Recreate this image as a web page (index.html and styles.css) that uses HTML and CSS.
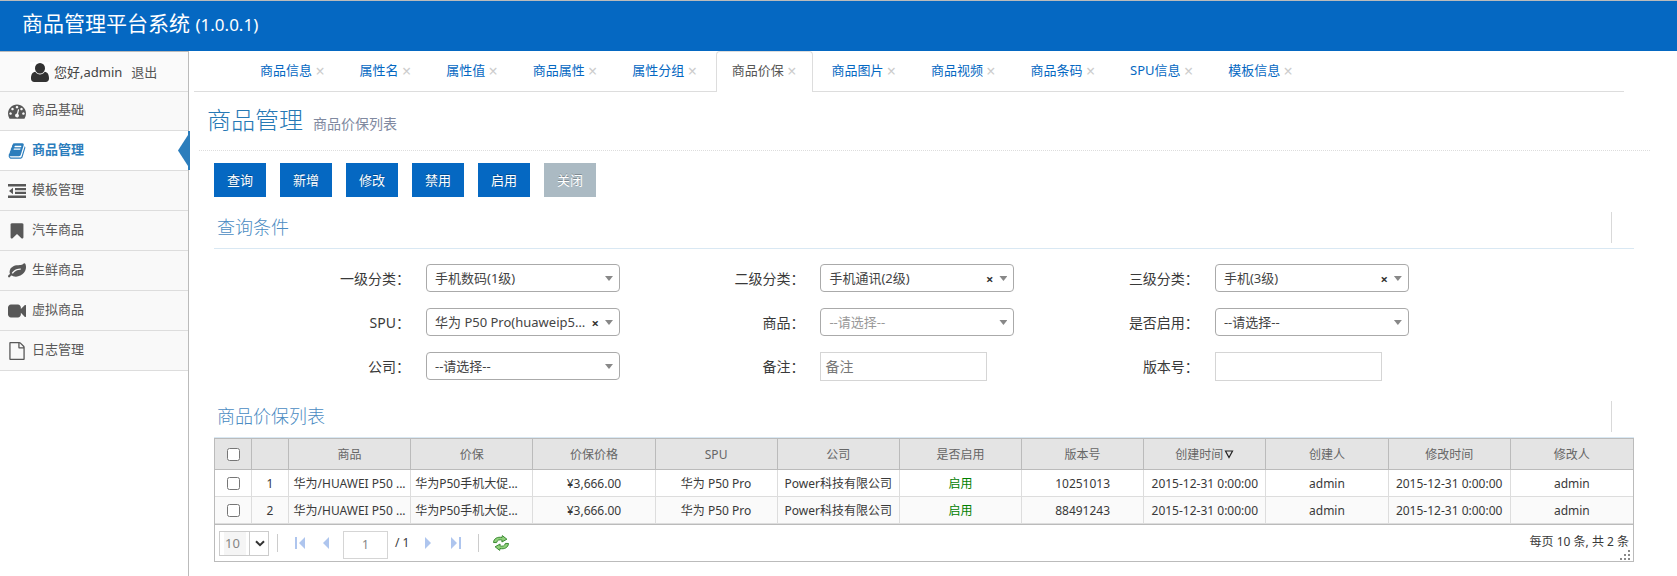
FILE: index.html
```html
<!DOCTYPE html>
<html lang="zh-CN">
<head>
<meta charset="utf-8">
<title>商品管理平台系统</title>
<link rel="stylesheet" href="styles.css">
</head>
<body>
<header class="topbar"><h1 class="brand">商品管理平台系统 <small>(1.0.0.1)</small></h1></header>
<div class="shell">
  <aside class="sidebar">
    <div class="user">
      <svg class="user-icon" viewBox="0 0 20 20" aria-hidden="true"><path d="M10 1a5 5 0 0 1 5 5.200c0 3-2.200 5.300-5 5.300s-5-2.300-5-5.300A5 5 0 0 1 10 1zM5.300 9.800C6.500 11.600 8.200 12.500 10 12.500s3.500-.9 4.700-2.700c3 .3 4.300 3 4.300 6.700 0 2-1.300 3.500-3.300 3.500H4.300C2.300 20 1 18.500 1 16.500c0-3.700 1.300-6.400 4.300-6.700z"/></svg>
      <span>您好,admin</span><a class="logout" href="#">退出</a>
    </div>
    <nav class="menu">
      <a href="#"><svg viewBox="0 0 1792 1792" aria-hidden="true"><path d="M384 1152q0-53-37.500-90.500t-90.500-37.500-90.500 37.500-37.500 90.500 37.500 90.500 90.500 37.500 90.500-37.500 37.500-90.500zm192-448q0-53-37.500-90.500t-90.500-37.500-90.500 37.500-37.500 90.500 37.500 90.500 90.500 37.500 90.500-37.500 37.500-90.500zm428 481l101-382q6-26-7.500-48.500t-38.500-29.500-48 6.500-30 39.500l-101 382q-60 5-107 43.500t-63 98.500q-20 77 20 146t117 89 146-20 89-117q16-60-6-117t-72-91zm660-33q0-53-37.500-90.500t-90.500-37.500-90.500 37.500-37.500 90.500 37.500 90.500 90.500 37.500 90.500-37.500 37.500-90.500zm-640-640q0-53-37.500-90.500t-90.500-37.500-90.500 37.500-37.500 90.500 37.500 90.500 90.500 37.500 90.500-37.500 37.500-90.500zm448 192q0-53-37.500-90.500t-90.500-37.500-90.500 37.500-37.500 90.500 37.500 90.500 90.500 37.500 90.500-37.500 37.500-90.500zm320 448q0 261-141 483-19 29-54 29h-1402q-35 0-54-29-141-221-141-483 0-182 71-348t191-286 286-191 348-71 348 71 286 191 191 286 71 348z"/></svg><span>商品基础</span></a>
      <a href="#" class="active" aria-current="page"><svg viewBox="0 0 1792 1792" aria-hidden="true"><path d="M1703 478q40 57 18 129l-275 906q-19 64-76.500 107.500t-122.500 43.500h-923q-77 0-148.500-53.500t-99.500-131.500q-24-67-2-127 0-4 3-27t4-37q1-8-3-21.500t-3-19.500q2-11 8-21t16.500-23.500 16.500-23.500q23-38 45-91.500t30-91.500q3-10 .5-30t-.5-28q3-11 17-28t17-23q21-36 42-92t25-90q1-9-2.500-32t.5-28q4-13 22-30.500t22-22.500q19-26 42.500-84.500t27.500-96.500q1-8-3-25.500t-2-26.500q2-8 9-18t18-23 17-21q8-12 16.500-30.500t15-35 16-36 19.500-32 26.500-23.500 36-11.500 47.500 5.500l-1 3q38-9 51-9h761q74 0 114 56t18 130l-274 906q-36 119-71.500 153.500t-128.500 34.500h-869q-27 0-38 15-11 16-1 43 24 70 144 70h923q29 0 56-15.500t35-41.500l300-987q7-22 5-57 38 15 59 43zm-1064 2q-4 13 2 22.500t20 9.500h608q13 0 25.500-9.500t16.500-22.500l21-64q4-13-2-22.500t-20-9.500h-608q-13 0-25.500 9.500t-16.500 22.500zm-83 256q-4 13 2 22.500t20 9.500h608q13 0 25.500-9.500t16.500-22.500l21-64q4-13-2-22.500t-20-9.500h-608q-13 0-25.500 9.500t-16.500 22.500z"/></svg><span>商品管理</span></a>
      <a href="#"><svg viewBox="0 0 18 18" aria-hidden="true"><path d="M0 2h18v2.500H0zM7 6h11v2.300H7zM7 9.700h11V12H7zM0 13.500h18V16H0zM5 5.800v6.400L1 9z"/></svg><span>模板管理</span></a>
      <a href="#"><svg viewBox="0 0 1792 1792" aria-hidden="true"><path d="M1420 128q23 0 44 9 33 13 52.500 41t19.500 62v1289q0 34-19.500 62t-52.500 41q-19 8-44 8-48 0-83-32l-441-424-441 424q-36 33-83 33-23 0-44-9-33-13-52.500-41t-19.500-62v-1289q0-34 19.500-62t52.500-41q21-9 44-9h1048z"/></svg><span>汽车商品</span></a>
      <a href="#"><svg viewBox="0 0 1792 1792" aria-hidden="true"><path d="M1280 704q0-26-19-45t-45-19q-172 0-318 49.500t-259.500 134-235.500 219.500q-19 21-19 45 0 26 19 45t45 19q24 0 45-19 27-24 74-71t67-66q137-124 268.500-176t313.500-52q26 0 45-19t19-45zm512-198q0 95-20 193-46 224-184.500 383t-357.500 268q-214 108-438 108-148 0-286-47-15-5-88-42t-96-37q-16 0-39.500 32t-45 70-52.500 70-60 32q-43 0-63.500-17.500t-45.500-59.500q-2-4-6-11t-5.500-10-3-9.500-1.500-13.500q0-35 31-73.500t68-65.500 68-56 31-48q0-4-14-38t-16-44q-9-51-9-104 0-115 43.500-220t119-184.500 170.500-139 204-95.500q55-18 145-25.500t179.500-9 178.500-6 163.500-24 113.500-56.500l29.500-29.500 29.500-28 27-20 36.500-16 43.500-4.500q39 0 70.500 46t47.500 112 24 124 8 96z"/></svg><span>生鲜商品</span></a>
      <a href="#"><svg viewBox="0 0 1792 1792" aria-hidden="true"><path d="M1792 352v1088q0 42-39 59-13 5-25 5-27 0-45-19l-403-403v166q0 119-84.500 203.500t-203.500 84.500h-704q-119 0-203.500-84.500t-84.500-203.500v-704q0-119 84.500-203.500t203.500-84.500h704q119 0 203.500 84.500t84.500 203.500v165l403-402q18-19 45-19 12 0 25 5 39 17 39 59z"/></svg><span>虚拟商品</span></a>
      <a href="#"><svg viewBox="0 0 1792 1792" aria-hidden="true"><path d="M1596 380q28 28 48 76t20 88v1152q0 40-28 68t-68 28h-1344q-40 0-68-28t-28-68v-1600q0-40 28-68t68-28h896q40 0 88 20t76 48zm-444-244v376h376q-10-29-22-41l-313-313q-12-12-41-22zm384 1528v-1024h-416q-40 0-68-28t-28-68v-416h-768v1536h1280z"/></svg><span>日志管理</span></a>
    </nav>
  </aside>
  <main class="main">
    <nav class="tabs">
      <div class="tab"><a href="#">商品信息</a> <button type="button" aria-label="关闭">×</button></div>
      <div class="tab"><a href="#">属性名</a> <button type="button" aria-label="关闭">×</button></div>
      <div class="tab"><a href="#">属性值</a> <button type="button" aria-label="关闭">×</button></div>
      <div class="tab"><a href="#">商品属性</a> <button type="button" aria-label="关闭">×</button></div>
      <div class="tab"><a href="#">属性分组</a> <button type="button" aria-label="关闭">×</button></div>
      <div class="tab current"><a href="#">商品价保</a> <button type="button" aria-label="关闭">×</button></div>
      <div class="tab"><a href="#">商品图片</a> <button type="button" aria-label="关闭">×</button></div>
      <div class="tab"><a href="#">商品视频</a> <button type="button" aria-label="关闭">×</button></div>
      <div class="tab"><a href="#">商品条码</a> <button type="button" aria-label="关闭">×</button></div>
      <div class="tab"><a href="#">SPU信息</a> <button type="button" aria-label="关闭">×</button></div>
      <div class="tab"><a href="#">模板信息</a> <button type="button" aria-label="关闭">×</button></div>
    </nav>
    <div class="page-header"><h2>商品管理</h2><small>商品价保列表</small></div>
    <div class="content">
      <div class="actions">
        <button type="button">查询</button><button type="button">新增</button><button type="button">修改</button><button type="button">禁用</button><button type="button">启用</button><button type="button" class="muted">关闭</button>
      </div>
      <section>
        <div class="widget-header"><h3>查询条件</h3><span class="tool"></span></div>
        <form class="filters">
          <div class="field"><label for="c1">一级分类：</label><div class="pick"><select id="c1"><option>手机数码(1级)</option></select></div></div>
          <div class="field"><label for="c2">二级分类：</label><div class="pick"><select id="c2"><option>手机通讯(2级)</option></select><button type="button" aria-label="清除">×</button></div></div>
          <div class="field"><label for="c3">三级分类：</label><div class="pick"><select id="c3"><option>手机(3级)</option></select><button type="button" aria-label="清除">×</button></div></div>
          <div class="field"><label for="spu">SPU：</label><div class="pick"><select id="spu"><option>华为 P50 Pro(huaweip50pro)</option></select><button type="button" aria-label="清除">×</button></div></div>
          <div class="field"><label for="goods">商品：</label><div class="pick empty"><select id="goods"><option>--请选择--</option></select></div></div>
          <div class="field"><label for="enabled">是否启用：</label><div class="pick"><select id="enabled"><option>--请选择--</option></select></div></div>
          <div class="field"><label for="company">公司：</label><div class="pick"><select id="company"><option>--请选择--</option></select></div></div>
          <div class="field"><label for="remark">备注：</label><input id="remark" type="text" placeholder="备注"></div>
          <div class="field"><label for="version">版本号：</label><input id="version" type="text"></div>
        </form>
      </section>
      <section>
        <div class="widget-header list-header"><h3>商品价保列表</h3><span class="tool"></span></div>
        <div class="grid-box">
          <table class="grid">
            <colgroup><col class="narrow"><col class="narrow"><col span="11"></colgroup>
            <thead><tr><th><input type="checkbox" aria-label="全选"></th><th></th><th>商品</th><th>价保</th><th>价保价格</th><th>SPU</th><th>公司</th><th>是否启用</th><th>版本号</th><th>创建时间<svg class="sort" viewBox="0 0 10 9" aria-hidden="true"><path d="M1.500 1h7L5 7.500z"/></svg></th><th>创建人</th><th>修改时间</th><th>修改人</th></tr></thead>
            <tbody>
              <tr><td><input type="checkbox" aria-label="选择第1行"></td><td>1</td><td>华为/HUAWEI P50 ...</td><td class="start">华为P50手机大促...</td><td>¥3,666.00</td><td>华为 P50 Pro</td><td>Power科技有限公司</td><td class="on">启用</td><td>10251013</td><td>2015-12-31 0:00:00</td><td>admin</td><td>2015-12-31 0:00:00</td><td>admin</td></tr>
              <tr><td><input type="checkbox" aria-label="选择第2行"></td><td>2</td><td>华为/HUAWEI P50 ...</td><td class="start">华为P50手机大促...</td><td>¥3,666.00</td><td>华为 P50 Pro</td><td>Power科技有限公司</td><td class="on">启用</td><td>88491243</td><td>2015-12-31 0:00:00</td><td>admin</td><td>2015-12-31 0:00:00</td><td>admin</td></tr>
            </tbody>
          </table>
          <div class="pager">
            <div class="size"><select aria-label="每页条数"><option>10</option></select><svg viewBox="0 0 10 7" aria-hidden="true"><path d="M1 1.200l4 4 4-4"/></svg></div>
            <span class="sep"></span>
            <button type="button" class="nav" aria-label="首页"><svg viewBox="0 0 12 12"><path d="M1 0h2v12H1zM11 0v12L5 6z"/></svg></button>
            <button type="button" class="nav prev" aria-label="上一页"><svg viewBox="0 0 12 12"><path d="M9 0v12L3 6z"/></svg></button>
            <input class="page" type="text" value="1" aria-label="页码">
            <span class="total">/ 1</span>
            <button type="button" class="nav" aria-label="下一页"><svg viewBox="0 0 12 12"><path d="M3 0v12l6-6z"/></svg></button>
            <button type="button" class="nav" aria-label="末页"><svg viewBox="0 0 12 12"><path d="M9 0h2v12H9zM1 0v12l6-6z"/></svg></button>
            <span class="sep"></span>
            <button type="button" class="refresh" aria-label="刷新"><svg viewBox="0 0 16 16"><path d="M.5 7.500C.8 3.500 4.500 1.500 9 2.500L9.300.6l4.600 3.600-5 2.800.2-1.900C6.500 4.300 4 5 3.600 7.600z"/><path d="M15.500 8.500c-.3 4-4 6-8.500 5l-.3 1.900-4.600-3.600 5-2.800-.2 1.900c2.600.8 5.100.1 5.500-2.500z"/></svg></button>
            <span class="info">每页 10 条, 共 2 条</span>
            <svg class="grip" viewBox="0 0 10 10" aria-hidden="true"><path d="M8 0h2v2H8zM4 4h2v2H4zM8 4h2v2H8zM0 8h2v2H0zM4 8h2v2H4zM8 8h2v2H8z"/></svg>
          </div>
        </div>
      </section>
    </div>
  </main>
</div>
</body>
</html>
```
FILE: styles.css
```css
* { box-sizing: border-box; }
body {
  margin: 0;
  min-height: 100vh;
  display: flex;
  flex-direction: column;
  background: #fff;
  color: #393939;
  font: 13px/20px "Noto Sans", "Noto Sans CJK SC", sans-serif;
}
button, input, select { font: inherit; color: inherit; margin: 0; }
button { padding: 0; border: 0; background: none; cursor: pointer; }
a { text-decoration: none; }
h1, h2, h3 { margin: 0; }

.topbar {
  height: 51px;
  padding: 0 22px;
  background: #0568c2;
  border-top: 1px solid #bbb;
  color: #fff;
}
.brand { font-size: 21px; font-weight: 400; line-height: 44px; }
.brand small { font-size: 17px; }

.shell { flex: 1; display: flex; }

.sidebar {
  width: 189px;
  flex: none;
  border-right: 1px solid #bbb;
}
.user {
  height: 41px;
  display: flex;
  align-items: center;
  padding-left: 30px;
  border-top: 1px solid #bbb;
  border-bottom: 1px solid #ddd;
  background: #fafafa;
  color: #444;
}
.user-icon {
  width: 20px;
  height: 20px;
  margin-right: 4px;
  background: #fff;
  fill: #333;
}
.logout { margin-left: 9px; color: #555; }

.menu a {
  display: flex;
  align-items: center;
  gap: 6px;
  height: 40px;
  padding-left: 8px;
  border-bottom: 1px solid #ddd;
  background: #f9f9f9;
  color: #585858;
}
.menu a:first-child { height: 39px; }
.menu svg { width: 18px; height: 18px; fill: currentColor; }
.menu span { padding-bottom: 4px; }
.menu .active {
  position: relative;
  background: #fff;
  color: #2b7dbc;
  font-weight: 700;
}
.menu .active::before,
.menu .active::after {
  content: "";
  position: absolute;
  top: 0;
  bottom: 0;
  background: #2b7dbc;
}
.menu .active::before { right: -2px; width: 2px; }
.menu .active::after {
  right: 0;
  width: 10px;
  clip-path: polygon(100% 10%, 0 50%, 100% 90%);
}

.main { flex: 1; min-width: 0; }

.tabs {
  display: flex;
  gap: 2px;
  margin: 0 53px 0 5px;
  padding-left: 50px;
  border-bottom: 1px solid #ddd;
}
.tab {
  height: 41px;
  margin-bottom: -1px;
  padding: 8px 16px 0 15px;
  border: 1px solid transparent;
  border-bottom: 0;
  border-radius: 4px 4px 0 0;
  white-space: nowrap;
}
.tab a { color: #0568c2; }
.tab button { color: #ccc; font-size: 16px; line-height: 20px; vertical-align: -2px; }
.tab.current { border-color: #ddd; background: #fff; }
.tab.current a { color: #555; }

.page-header {
  display: flex;
  align-items: baseline;
  gap: 10px;
  height: 59px;
  margin: 0 27px 0 10px;
  padding: 10px 8px 0;
  border-bottom: 1px dotted #ddd;
}
.page-header h2 { font-size: 24px; font-weight: 300; line-height: 36px; color: #2679b5; }
.page-header small { font-size: 14px; color: #8089a0; }

.content { margin: 12px 43px 0 25px; }
.actions { display: flex; gap: 14px; }
.actions button {
  width: 52px;
  height: 34px;
  background: #0568c2;
  color: #fff;
  text-shadow: 0 -1px 0 rgba(0, 0, 0, .25);
}
.actions .muted { background: #abbac3; }

.widget-header {
  display: flex;
  align-items: flex-end;
  justify-content: space-between;
  height: 52px;
  padding: 0 22px 5px 3px;
  border-bottom: 1px solid #d9e8f3;
}
.widget-header h3 { font-size: 18px; font-weight: 300; line-height: 32px; color: #4a8bc2; }
.tool { width: 1px; height: 31px; background: #d9d9d9; }

.filters {
  display: grid;
  grid-template-columns: repeat(3, minmax(0, 5fr)) minmax(0, 3fr);
  row-gap: 15px;
  padding: 15px 0 0;
}
.filters .field:nth-child(3n + 1) { grid-column: 1; }
.field { display: flex; gap: 16px; height: 29px; padding-left: 50px; }
.field label { width: 146px; flex: none; text-align: right; font-size: 14px; line-height: 29px; }
.pick { position: relative; width: 194px; height: 28px; flex: none; }
.pick::after {
  content: "";
  position: absolute;
  right: 7px;
  top: 12px;
  width: 8px;
  height: 5px;
  background: #888;
  clip-path: polygon(0 0, 100% 0, 50% 100%);
  pointer-events: none;
}
.pick select {
  appearance: none;
  width: 100%;
  height: 28px;
  padding: 0 30px 0 8px;
  border: 1px solid #aaa;
  border-radius: 4px;
  background: #fff;
  color: #444;
  text-overflow: ellipsis;
}
.pick.empty select { color: #999; }
.pick button { position: absolute; right: 21px; top: 5px; font-weight: 700; color: #333; }
.field > input {
  width: 167px;
  flex: none;
  padding: 0 4px;
  border: 1px solid #d5d5d5;
  background: #fff;
  font-size: 14px;
}
.field > input::placeholder { color: #777; }

.list-header { height: 57px; }
.grid-box {
  border: 1px solid #bbb;
  font-size: 12px;
}
.grid { width: 100%; table-layout: fixed; border-collapse: separate; border-spacing: 0; }
.grid .narrow { width: 37px; }
.grid th, .grid td {
  padding: 2px 2px 0;
  border-right: 1px solid #ddd;
  border-bottom: 1px solid #ddd;
  text-align: center;
  font-weight: 400;
  white-space: nowrap;
  overflow: hidden;
  text-overflow: ellipsis;
}
.grid th { height: 31px; background: #e4e4e4; border-color: #bbb; color: #666; }
.grid td { height: 27px; }
.grid .start { padding-left: 4px; text-align: left; }
.grid th:first-child, .grid td:first-child { padding-top: 0; }
.grid th:last-child, .grid td:last-child { border-right: 0; }
.grid tr:nth-child(2) td { background: #fafafa; }
.grid input { display: block; width: 13px; height: 13px; margin: 0 auto; }
.grid .on { color: #008000; }
.sort { width: 10px; height: 9px; margin-left: 1px; fill: none; stroke: #222; stroke-width: 1.2; }

.pager {
  position: relative;
  display: flex;
  align-items: center;
  height: 37px;
  padding: 0 4px;
  border-top: 1px solid #bbb;
}
.size { position: relative; }
.size select {
  appearance: none;
  display: block;
  width: 50px;
  height: 25px;
  padding: 0 0 0 5px;
  border: 1px solid #ccc;
  background: linear-gradient(90deg, #fff 4px, #f5f5f5 4px 26px, #fff 26px 29px, #ccc 29px 30px, #fff 30px);
  color: #858585;
  font-size: 13px;
}
.size svg {
  position: absolute;
  right: 4px;
  top: 9px;
  width: 10px;
  height: 7px;
  fill: none;
  stroke: #333;
  stroke-width: 2;
  pointer-events: none;
}
.sep { width: 1px; height: 18px; margin: 0 8px; background: #ccc; }
.nav { padding: 0 8px; line-height: 0; }
.nav svg { width: 12px; height: 12px; fill: #aec5ee; }
.nav.prev { padding: 0 4px 0 6px; }
.page {
  width: 45px;
  height: 28px;
  margin: 3px 7px 0;
  padding: 0;
  border: 1px solid #d5d5d5;
  color: #858585;
  text-align: center;
}
.total { margin-right: 5px; }
.refresh { margin-left: 6px; line-height: 0; }
.refresh svg { width: 16px; height: 16px; fill: #8fd07a; stroke: #3c8a35; stroke-width: 1; }
.info { margin-left: auto; padding-bottom: 2px; }
.grip { position: absolute; right: 3px; bottom: 1px; width: 10px; height: 10px; fill: #888; }
```
